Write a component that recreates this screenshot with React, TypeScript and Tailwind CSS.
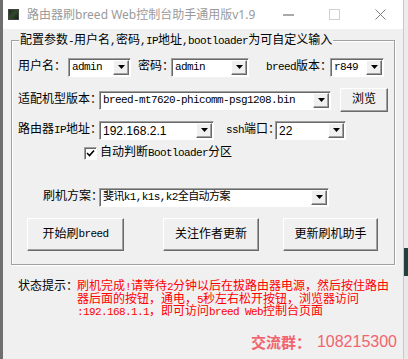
import React from 'react';

const base = "font-['Liberation_Mono','Noto_Sans_CJK_SC',monospace] text-[12px] text-black";

// latin runs are narrower than in the CJK font
function E({ children }: { children: React.ReactNode }) {
  return <span className="text-[11px] tracking-[-0.6px]">{children}</span>;
}

// full-width colon, squeezed like the original
function C() {
  return <span className="inline-block w-[8px] overflow-visible">：</span>;
}

function Arrow() {
  return (
    <svg width="7" height="4" viewBox="0 0 7 4">
      <path d="M0 0h7L3.5 4z" fill="#000" />
    </svg>
  );
}

function Combo({ w, value, arial }: { w: string; value: string; arial?: boolean }) {
  return (
    <div
      className={`flex h-[19px] ${w} shrink-0 bg-white border border-[#a0a0a0] border-r-white border-b-white shadow-[inset_1px_1px_0_#696969]`}
    >
      <div
        className={`flex-1 flex items-center pl-[3px] pt-px overflow-hidden whitespace-nowrap ${
          arial ? "font-['Liberation_Sans',sans-serif] text-[12px]" : 'text-[11px] tracking-[-0.6px]'
        }`}
      >
        {value}
      </div>
      <div className="w-[16px] my-px mr-px flex items-center justify-center bg-[#f0f0f0] border border-white border-r-[#696969] border-b-[#696969] shadow-[inset_-1px_-1px_0_#a0a0a0]">
        <Arrow />
      </div>
    </div>
  );
}

function Btn({ cls, children }: { cls: string; children: React.ReactNode }) {
  return (
    <button
      className={`${cls} shrink-0 flex items-center justify-center bg-[#f0f0f0] border border-white border-r-[#696969] border-b-[#696969] shadow-[inset_-1px_-1px_0_#a0a0a0] whitespace-nowrap`}
    >
      {children}
    </button>
  );
}

export default function App() {
  return (
    <div className={`flex w-[408px] h-[359px] overflow-hidden ${base}`}>
      <div className="w-[3px] shrink-0 bg-[#6f6f6f]" />

      <div className="w-[400px] shrink-0 flex flex-col bg-[#f0f0f0]">
        {/* title bar */}
        <div className="h-[29px] shrink-0 flex items-center bg-white">
          <div className="ml-[5px] w-[11px] h-[11px] bg-gradient-to-br from-[#1d2b1d] via-[#2f4a2c] to-[#162016] border border-[#444]" />
          <div className="ml-[8px] flex-1 font-['Noto_Sans','Noto_Sans_CJK_SC',sans-serif] text-[12px] text-[#9a9a9a] whitespace-nowrap">
            路由器刷breed Web控制台助手通用版v1.9
          </div>
          <div className="w-[46px] h-full flex items-center justify-center">
            <svg width="11" height="2" viewBox="0 0 11 2">
              <path d="M0 1h11" stroke="#555" strokeWidth="1" />
            </svg>
          </div>
          <div className="w-[46px] h-full flex items-center justify-center">
            <svg width="11" height="11" viewBox="0 0 11 11">
              <rect x="0.5" y="0.5" width="10" height="10" fill="none" stroke="#d0d0d0" />
            </svg>
          </div>
          <div className="w-[46px] h-full flex items-center justify-center">
            <svg width="11" height="11" viewBox="0 0 11 11">
              <path d="M0.5 0.5l10 10M10.5 0.5l-10 10" stroke="#808080" strokeWidth="1" />
            </svg>
          </div>
        </div>

        {/* group box */}
        <div className="relative ml-[8px] mt-[11px] w-[384px] border border-[#a0a0a0] shadow-[inset_1px_1px_0_#fff,1px_1px_0_#fff] pl-[6px] pb-[13px]">
          <span className="absolute left-[7px] top-[-9px] px-[1px] bg-[#f0f0f0] whitespace-nowrap">
            配置参数<E>-</E>用户名<E>,</E>密码<E>,IP</E>地址<E>,bootloader</E>为可自定义输入
          </span>

          <div className="mt-[14px] h-[24px] flex items-center whitespace-nowrap">
            <span className="w-[50px] shrink-0">
              用户名<C />
            </span>
            <Combo w="w-[63px]" value="admin" />
            <span className="ml-[7px] w-[33px] shrink-0">
              密码<C />
            </span>
            <Combo w="w-[78px]" value="admin" />
            <span className="ml-[17px] w-[64px] shrink-0">
              <E>breed</E>版本<C />
            </span>
            <Combo w="w-[54px]" value="r849" />
          </div>

          <div className="mt-[9px] h-[24px] flex items-center whitespace-nowrap">
            <span className="w-[81px] shrink-0">
              适配机型版本<C />
            </span>
            <Combo w="w-[232px]" value="breed-mt7620-phicomm-psg1208.bin" />
            <Btn cls="ml-[9px] w-[48px] h-[24px]">浏览</Btn>
          </div>

          <div className="mt-[8px] h-[20px] flex items-center whitespace-nowrap">
            <span className="w-[81px] shrink-0">
              路由器<E>IP</E>地址<C />
            </span>
            <Combo w="w-[115px]" value="192.168.2.1" arial />
            <span className="ml-[12px] w-[49px] shrink-0">
              <E>ssh</E>端口<C />
            </span>
            <Combo w="w-[71px]" value="22" arial />
          </div>

          <div className="mt-[5px] h-[16px] flex items-center">
            <div className="ml-[66px] w-[13px] h-[13px] shrink-0 flex items-center justify-center bg-white border border-[#a0a0a0] border-r-white border-b-white shadow-[inset_1px_1px_0_#696969]">
              <svg width="9" height="9" viewBox="0 0 9 9">
                <path d="M1 4l2.5 2.5L8 1.5" fill="none" stroke="#000" strokeWidth="1.6" />
              </svg>
            </div>
            <span className="ml-[3px] whitespace-nowrap">
              自动判断<E>Bootloader</E>分区
            </span>
          </div>

          <div className="mt-[26px] h-[20px] flex items-center whitespace-nowrap">
            <span className="w-[81px] shrink-0 pl-[25px]">
              刷机方案<C />
            </span>
            <Combo w="w-[230px]" value="斐讯k1,k1s,k2全自动方案" />
          </div>

          <div className="mt-[11px] flex items-center">
            <Btn cls="ml-[9px] w-[97px] h-[33px]">
              开始刷<E>breed</E>
            </Btn>
            <Btn cls="ml-[39px] w-[96px] h-[33px]">关注作者更新</Btn>
            <Btn cls="ml-[24px] w-[95px] h-[33px]">更新刷机助手</Btn>
          </div>
        </div>

        {/* status */}
        <div className="mt-[16px] pl-[15px] flex">
          <span className="w-[59px] shrink-0 leading-[12.5px] whitespace-nowrap">
            状态提示<C />
          </span>
          <div className="text-[#ff0000] leading-[12.5px] whitespace-nowrap">
            <div>
              刷机完成<E>!</E>请等待<E>2</E>分钟以后在拔路由器电源，然后按住路由
            </div>
            <div>
              器后面的按钮，通电，<E>5</E>秒左右松开按钮，浏览器访问
            </div>
            <div>
              <E>:192.168.1.1</E>，即可访问<E>breed Web</E>控制台页面
            </div>
          </div>
        </div>

        <div className="mt-auto mb-[5px] pr-[6px] flex justify-end items-center text-[#f0646e] whitespace-nowrap">
          <span className="font-['Noto_Sans_CJK_SC',serif] font-bold text-[15px]">交流群：</span>
          <span className="font-['Liberation_Sans',sans-serif] text-[16px] ml-[6px]">108215300</span>
        </div>
      </div>

      <div className="w-[5px] shrink-0 flex flex-col border-l border-[#c8c8c8]">
        <div className="h-[248px] bg-[#ececec]" />
        <div className="h-[28px] bg-[#23403d]" />
        <div className="flex-1 bg-[#e9e9e9]" />
      </div>
    </div>
  );
}
